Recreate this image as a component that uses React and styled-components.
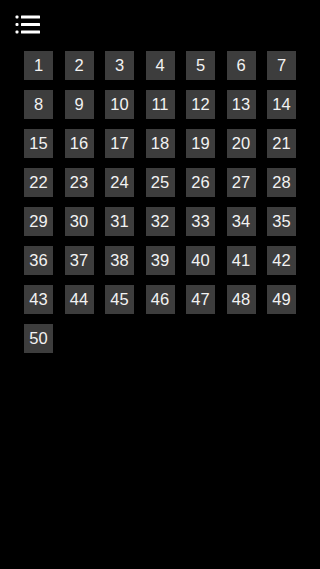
import styled, { createGlobalStyle } from "styled-components";

const GlobalStyle = createGlobalStyle`
  html, body {
    margin: 0;
    padding: 0;
    background: #000;
  }
  body {
    font-family: "Liberation Sans", Arial, sans-serif;
    color: #eee;
  }
`;

const Page = styled.div`
  min-height: 569px;
  background: #000;
`;

const TopBar = styled.header`
  height: 51px;
  padding: 14px 0 0 15px;
  box-sizing: border-box;
`;

const MenuButton = styled.button`
  display: block;
  padding: 0;
  border: none;
  background: none;
  cursor: pointer;
  width: 26px;
  height: 20px;
`;

const Board = styled.div`
  display: grid;
  grid-template-columns: repeat(7, 29px);
  column-gap: 11.5px;
  row-gap: 10px;
  padding-left: 24px;
`;

const Tile = styled.div`
  width: 29px;
  height: 29px;
  background: #3d3d3d;
  color: #f2f2f2;
  font-size: 16.5px;
  display: flex;
  align-items: center;
  justify-content: center;
  user-select: none;
`;

const ListIcon = () => (
  <svg width="26" height="20" viewBox="0 0 26 20">
    <g fill="#fff">
      <rect x="0.5" y="1.5" width="3" height="3" rx="1" />
      <rect x="0.5" y="9" width="3" height="3" rx="1" />
      <rect x="0.5" y="16.5" width="3" height="3" rx="1" />
      <rect x="6" y="1.5" width="19" height="3" rx="0.5" />
      <rect x="6" y="9" width="19" height="3" rx="0.5" />
      <rect x="6" y="16.5" width="19" height="3" rx="0.5" />
    </g>
  </svg>
);

const numbers = Array.from({ length: 50 }, (_, i) => i + 1);

const App = () => {
  return (
    <Page>
      <GlobalStyle />
      <TopBar>
        <MenuButton aria-label="menu">
          <ListIcon />
        </MenuButton>
      </TopBar>
      <Board>
        {numbers.map((n) => (
          <Tile key={n}>{n}</Tile>
        ))}
      </Board>
    </Page>
  );
};

export default App;
